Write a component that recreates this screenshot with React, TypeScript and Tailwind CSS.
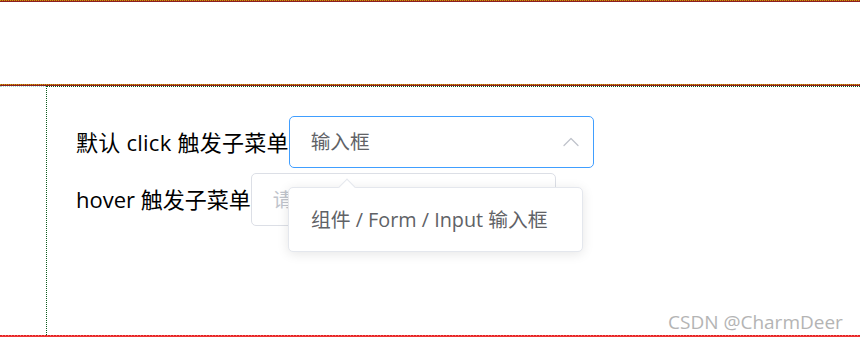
import { ChevronUp } from 'lucide-react'

const FONT = 'font-["Open_Sans","Noto_Sans_CJK_SC",sans-serif]'

export default function App() {
  return (
    <div className={`relative h-[341px] w-[860px] overflow-hidden bg-white ${FONT}`}>
      {/* Top ruler */}
      <div className="h-px bg-[repeating-linear-gradient(90deg,#c9a800_0px,#c9a800_1px,#a52a22_1px,#a52a22_2px)]" />
      <div className="h-px bg-[#8c2020]" />
      <div className="h-[82px]" />
      <div className="h-px bg-[repeating-linear-gradient(90deg,#c9a800_0px,#c9a800_1px,#a52a22_1px,#a52a22_2px)]" />
      <div className="h-px bg-[#8c2020]" />

      {/* Body */}
      <div className="flex h-[249px]">
        <div className="w-[46px] shrink-0 border-t border-dotted border-[#9fd8d0]" />
        <div className="flex-1 border-l border-t border-dotted border-[#0b5a1c] pl-[29px] pt-[29px]">
          <div className="flex h-[52px] items-center">
            <span className="text-[22px] tracking-[0.25px] text-black">默认 click 触发子菜单</span>
            <div className="flex h-[52px] w-[305px] items-center justify-between rounded-[5px] border border-[#409eff] pl-[21px] pr-[8px]">
              <span className="text-[19.7px] text-[#606266]">输入框</span>
              <ChevronUp className="h-[28px] w-[28px] text-[#c0c4cc]" strokeWidth={1.1} />
            </div>
          </div>
          <div className="mt-[5px] flex h-[53px] items-center">
            <span className="text-[22px] text-black">hover 触发子菜单</span>
            <div className="flex h-[53px] w-[305px] items-center rounded-[5px] border border-[#dcdfe6] pl-[21px]">
              <span className="text-[19.7px] text-[#c0c4cc]">请选择</span>
            </div>
          </div>
        </div>
      </div>

      {/* Bottom ruler */}
      <div className="h-px bg-[repeating-linear-gradient(90deg,#d22_0px,#d22_2px,#f66_2px,#f66_3px)]" />
      <div className="h-px bg-[#e33]" />

      {/* Cascader dropdown */}
      <div className="absolute left-[288px] top-[187px] w-[295px] rounded-[5px] border border-[#e4e7ed] bg-white shadow-[0_2px_12px_0_rgba(0,0,0,0.1)]">
        <div className="absolute -top-[7px] left-[52px] h-3 w-3 rotate-45 border-l border-t border-[#e4e7ed] bg-white" />
        <div className="flex h-[63px] items-center pl-[22px] text-[19.8px] text-[#606266]">
          组件 / Form / Input 输入框
        </div>
      </div>

      {/* Watermark */}
      <div className="absolute left-[668px] top-[308px] text-[19px] text-[#b4b4b4] [text-shadow:0_0_1px_#fff]">
        CSDN @CharmDeer
      </div>
    </div>
  )
}
